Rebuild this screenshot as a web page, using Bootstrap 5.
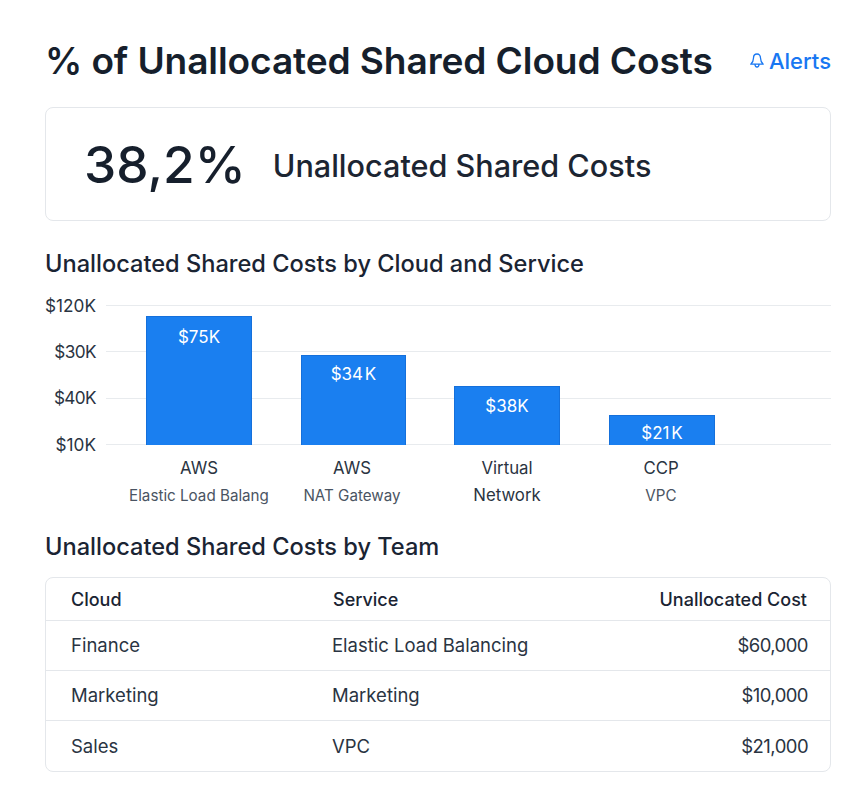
<!DOCTYPE html>
<html lang="en"><head><meta charset="utf-8">
<link href="https://cdn.jsdelivr.net/npm/bootstrap@5.3.0/dist/css/bootstrap.min.css" rel="stylesheet">
<style>
html,body{height:796px;overflow:hidden}
body{background:#fff;color:#1a2433;font-family:Inter,"Liberation Sans",sans-serif;}
.pg{padding:39px 31px 0 45px}
.ttl{font-size:37.1px;font-weight:600;line-height:44px;margin:0;color:#161f2c;letter-spacing:-.1px;padding-left:1px;white-space:nowrap;margin-left:-1px}
.alrt{color:#1877f2;font-size:22px;font-weight:500;text-decoration:none;display:flex;align-items:center;gap:5px}
.kpi{height:114px;margin-top:24px;border:1px solid #e4e7eb;border-radius:8px;padding-left:38px;gap:27px}
.bignum{font-size:51.4px;font-weight:500;line-height:1;color:#161f2c;position:relative;top:1px}
.kpil{font-size:30.6px;font-weight:500;color:#1c2532;position:relative;top:2px}
.sect{font-size:23.6px;font-weight:500;line-height:30px;margin:0;color:#1a2433}
.chartbox{height:214px;margin-top:9px;position:relative}
.gridl{position:absolute;left:61px;right:0;height:1px;background:#e8ebee}
.ylab{position:absolute;left:0;width:51px;text-align:right;font-size:17.2px;line-height:20px;color:#2a3442}
.ynar{letter-spacing:-.6px}
.barw{position:absolute;width:106px;background:#1a7ff0;color:#fff;text-align:center;font-size:17px;line-height:22px;border:1px solid #1570db;border-bottom:0;word-spacing:-3px}
.xlab{position:absolute;width:170px;text-align:center;font-size:16.8px;line-height:27px;color:#2a3442}
.xlab small{display:block;font-size:15.2px;color:#4a5462}
.tbx{border:1px solid #e4e7eb;border-radius:8px;margin-top:15px;overflow:hidden}
.tbx table{margin:0;font-size:18.5px;color:#2a3442}
.tbx th{font-weight:500;font-size:18px;height:42px;vertical-align:middle;padding:2px 23px 0 25px;border-color:#e4e7eb;color:#1a2433}
.tbx td{height:50.3px;vertical-align:middle;padding:1px 22px 0 25px;border-color:#e4e7eb;color:#2a3442}
.tbx td.amt{letter-spacing:-.55px}
.tbx td.svc{padding-left:24px}
</style></head><body>
<div class="pg">
 <div class="d-flex justify-content-between align-items-center">
  <h1 class="ttl">% of Unallocated Shared Cloud Costs</h1>
  <a class="alrt" href="#"><svg width="14" height="16" viewBox="0 0 14 16" fill="none" stroke="currentColor" stroke-width="1.300" stroke-linejoin="round"><path d="M7 1C4.800 1 3.500 2.800 3.500 5c0 3-1.200 4.800-2.700 6.200h12.400C11.700 9.800 10.500 8 10.500 5 10.500 2.800 9.200 1 7 1zM5 11.500c.1 3.300 3.900 3.300 4 0"/></svg>Alerts</a>
 </div>
 <div class="kpi d-flex align-items-center"><span class="bignum">38,2%</span><span class="kpil">Unallocated Shared Costs</span></div>
 <h2 class="sect" style="margin-top:28px">Unallocated Shared Costs by Cloud and Service</h2>
 <div class="chartbox">
  <div class="gridl" style="top:17px"></div><div class="gridl" style="top:63px"></div><div class="gridl" style="top:110px"></div><div class="gridl" style="top:156px"></div>
  <div class="ylab" style="top:8px">$120K</div><div class="ylab ynar" style="top:54px">$30K</div><div class="ylab ynar" style="top:100px">$40K</div><div class="ylab" style="top:147px">$10K</div>
  <div class="barw" style="left:101px;top:28px;height:129px;padding-top:9px">$75K</div>
  <div class="barw" style="left:256px;top:67px;width:105px;height:90px;padding-top:7px">$34 K</div>
  <div class="barw" style="left:409px;top:98px;height:59px;padding-top:8px">$38K</div>
  <div class="barw" style="left:564px;top:127px;height:30px;padding-top:6px">$21 K</div>
  <div class="xlab" style="left:69px;top:167px">AWS<small>Elastic Load Balang</small></div>
  <div class="xlab" style="left:222px;top:167px">AWS<small>NAT Gateway</small></div>
  <div class="xlab" style="left:377px;top:167px">Virtual<br>Network</div>
  <div class="xlab" style="left:531px;top:167px">CCP<small>VPC</small></div>
 </div>
 <h2 class="sect" style="margin-top:30px">Unallocated Shared Costs by Team</h2>
 <div class="tbx"><table class="table"><thead><tr><th style="width:262px">Cloud</th><th>Service</th><th class="text-end">Unallocated Cost</th></tr></thead>
 <tbody><tr><td>Finance</td><td class="svc">Elastic Load Balancing</td><td class="text-end amt">$60,000</td></tr><tr><td>Marketing</td><td class="svc">Marketing</td><td class="text-end amt">$10,000</td></tr><tr><td class="border-0">Sales</td><td class="border-0 svc">VPC</td><td class="text-end border-0 amt">$21,000</td></tr></tbody></table></div>
</div>
</body></html>
